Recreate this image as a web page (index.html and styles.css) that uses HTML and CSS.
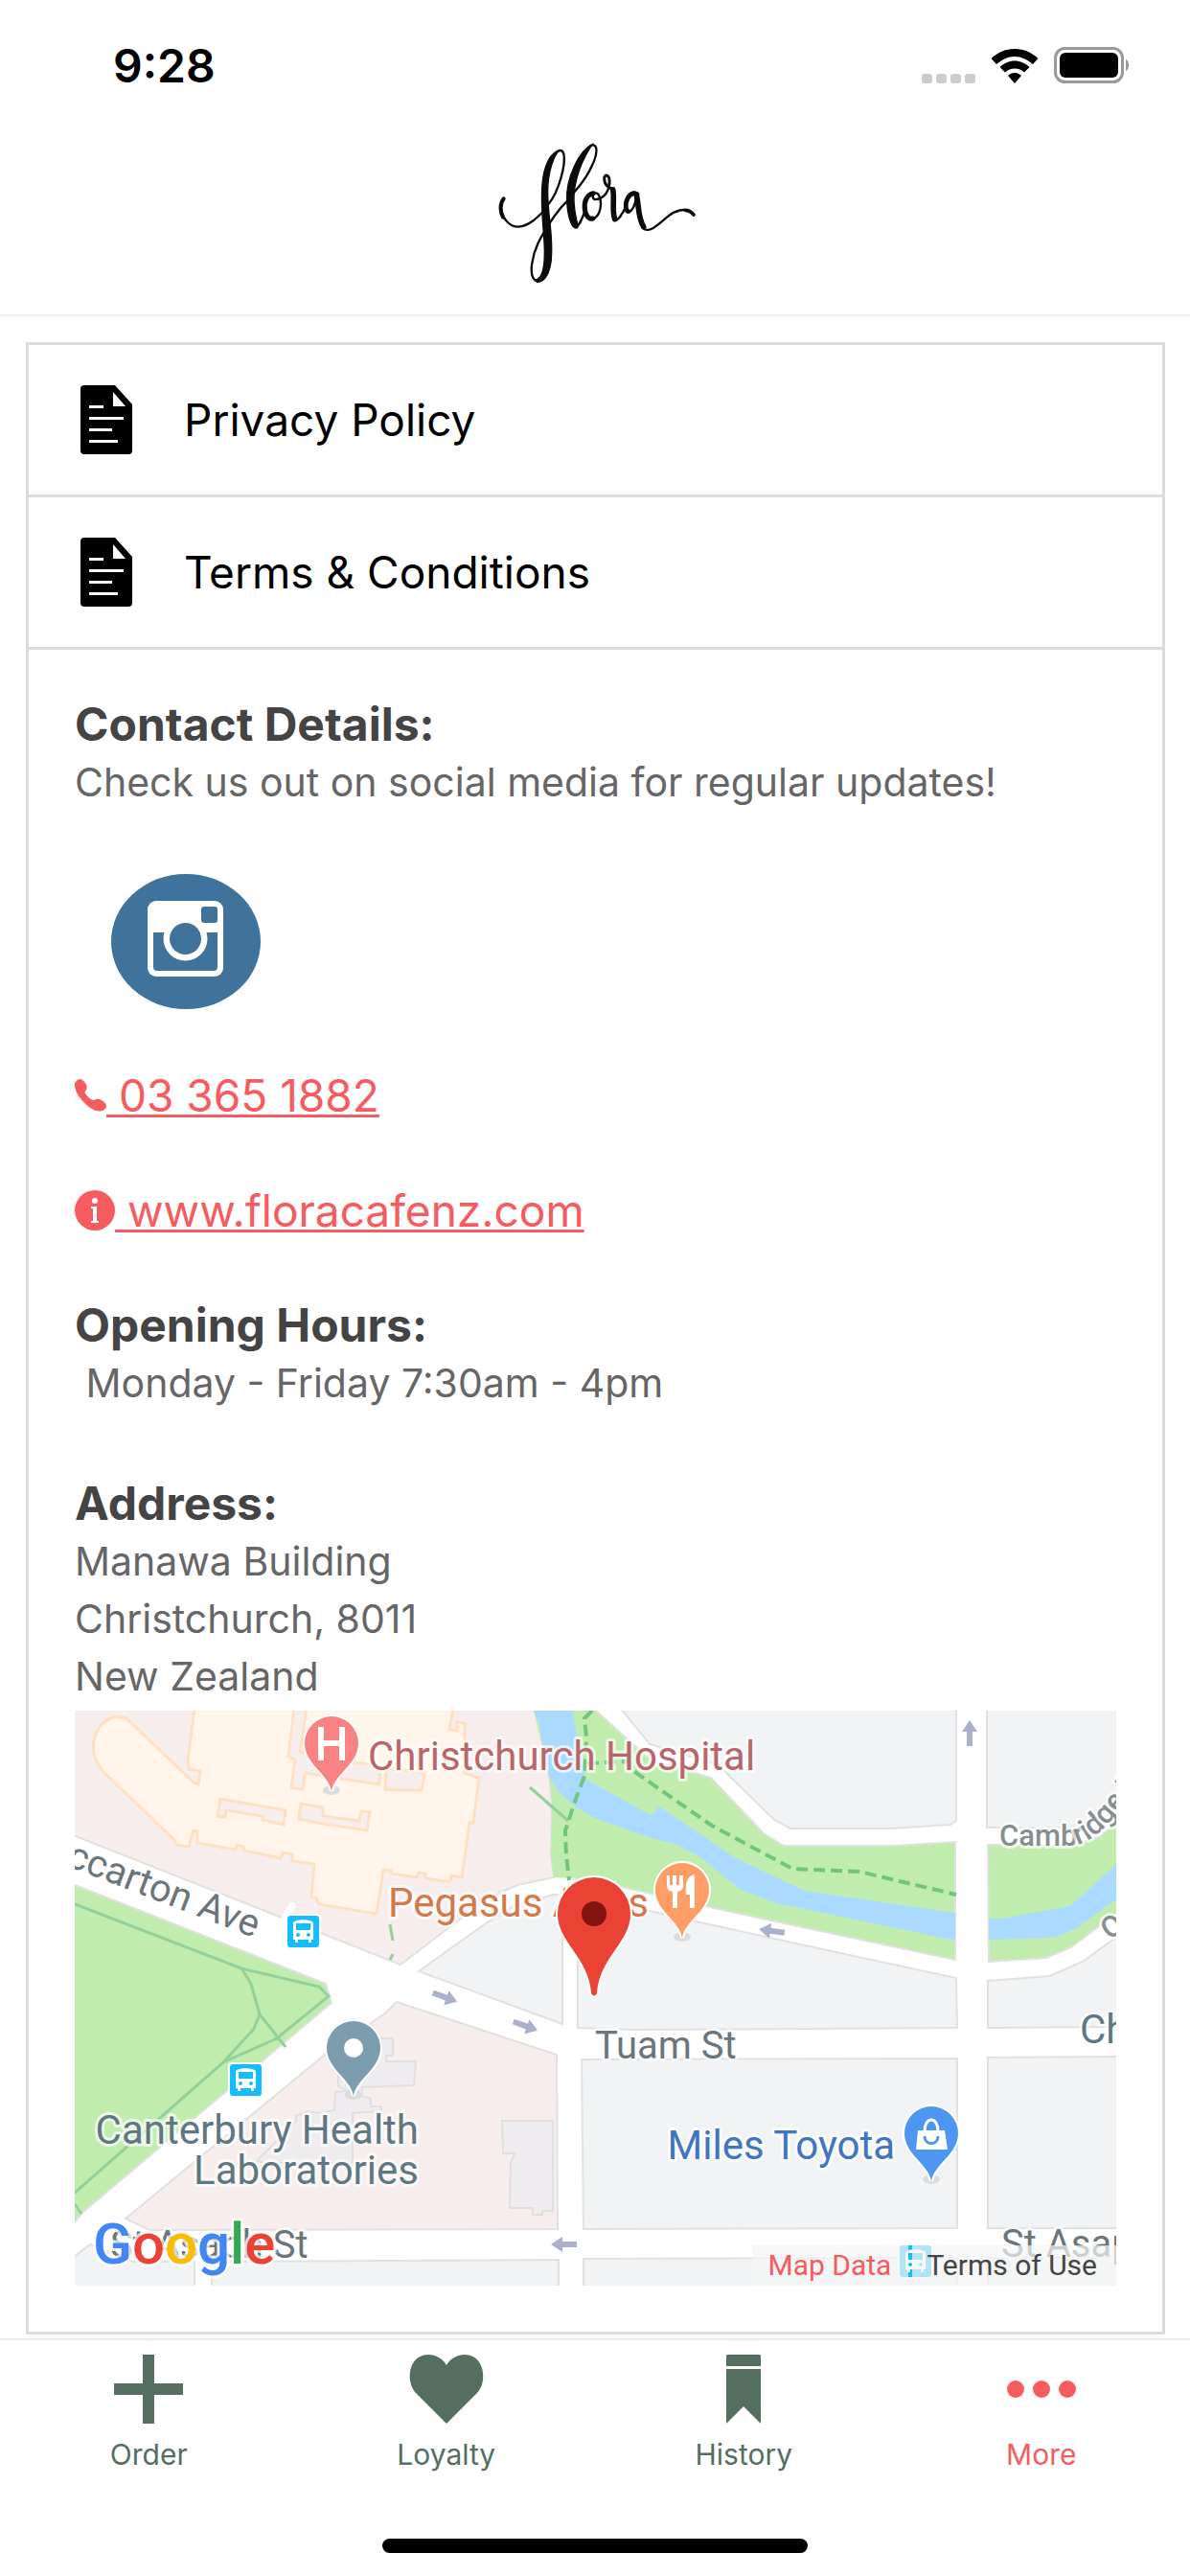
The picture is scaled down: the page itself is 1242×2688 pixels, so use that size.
FILE: index.html
```
<!DOCTYPE html>
<html lang="en">
<head>
    <meta charset="utf-8">
    <meta name="viewport" content="width=device-width, initial-scale=1.0">
    <title>Flora - More</title>
    <link rel="stylesheet" href="styles.css">
</head>
<body>
    <div class="status-bar">
        <span class="time">9:28</span>
        <div class="status-icons">
            <svg class="signal" viewBox="0 0 56 10" aria-hidden="true">
                <rect x="0" width="11" height="10" rx="3"/>
                <rect x="15" width="11" height="10" rx="3"/>
                <rect x="30" width="11" height="10" rx="3"/>
                <rect x="45" width="11" height="10" rx="3"/>
            </svg>
            <svg class="wifi" viewBox="0 0 50 36" aria-hidden="true">
                <path d="M25 0C35 0 43 4 49.5 10L44 16C38 11 32 8 25 8S12 11 6 16L.5 10C7 4 15 0 25 0Z"/>
                <path d="M25 12.5C31 12.5 36 15 40.5 19L35 24.5C32 22 29 20.5 25 20.5S18 22 15 24.5L9.5 19C14 15 19 12.5 25 12.5Z"/>
                <path d="M25 25C28 25 30 26 32 28L25 36L18 28C20 26 22 25 25 25Z"/>
            </svg>
            <svg class="battery" viewBox="0 0 80 38" aria-hidden="true">
                <rect x="1.5" y="1.5" width="70" height="35" rx="10" fill="none" stroke="#999" stroke-width="3"/>
                <rect x="6" y="6" width="61" height="26" rx="6"/>
                <path d="M75 13C79 14 79 24 75 25Z" fill="#999"/>
            </svg>
        </div>
    </div>

    <header class="header">
        <svg class="logo" viewBox="0 0 720 540" role="img" aria-label="Flora">
            <g fill="none" stroke="#0b0b0b" stroke-width="7" stroke-linecap="round" stroke-linejoin="round">
                <path d="M74 232C60 250 64 275 72 290" stroke-width="12"/>
                <path d="M66 262C72 300 95 320 120 320C155 318 180 290 208 262"/>
                <path d="M246 82C272 72 264 130 254 165C244 200 230 230 215 248"/>
                <path d="M180 492C145 480 165 400 190 355C215 310 240 270 274 238"/>
                <path d="M345 66C375 55 365 100 350 130C335 165 310 195 293 214"/>
                <path d="M300 320C314 316 320 290 332 262"/>
                <path d="M355 215C335 218 325 240 328 265C331 288 343 297 353 294" stroke-width="15"/>
                <path d="M353 296C380 285 384 240 370 218C360 206 346 224 358 234C378 236 402 220 405 185"/>
                <path d="M405 186C408 152 388 154 389 170C390 186 398 196 412 200" stroke-width="9"/>
                <path d="M416 204C422 230 412 270 422 296" stroke-width="17"/>
                <path d="M424 300C438 296 444 280 456 258"/>
                <path d="M482 215C465 218 454 240 457 260C458 266 461 272 464 272" stroke-width="14"/>
                <path d="M464 275C478 270 486 250 489 228M474 214C482 210 492 212 496 218"/>
                <path d="M490 220C498 256 494 290 512 320" stroke-width="17"/>
                <path d="M510 324C530 344 562 308 590 286C612 268 640 262 658 272"/>
                <path d="M642 268C654 268 664 276 669 282" stroke-width="11"/>
            </g>
            <g fill="#0b0b0b" stroke="#0b0b0b" stroke-width="4">
                <path d="M250 80C225 85 198 120 194 200C190 280 202 340 202 400C202 460 190 485 172 486C188 506 224 480 224 400C226 330 212 280 212 210C212 150 230 95 250 80Z"/>
                <path d="M352 62C310 80 268 170 272 240C275 295 290 334 306 322C308 310 296 290 294 240C292 170 325 100 352 62Z"/>
            </g>
        </svg>
    </header>

    <!-- shared map shapes -->
    <svg class="defs" aria-hidden="true">
        <defs>
            <path id="pin" d="M0 50C-3 32-28 22-28 0A28 28 0 0 1 28 0C28 22 3 32 0 50Z"/>
            <path id="arrow" d="M-13-3H2V-8L14 0L2 8V3H-13Z" fill="#adb0cc"/>
            <g id="bus">
                <rect x="-2" y="-2" width="37" height="37" rx="4" fill="#fff"/>
                <rect width="33" height="33" rx="3" fill="#14bdff"/>
                <path d="M6 8C6 3 27 3 27 8V25H25V28H22V25H11V28H8V25H6Z" fill="#fff"/>
                <path d="M9 8H24V15H9Z" fill="#14bdff"/>
                <circle cx="11" cy="20" r="2" fill="#14bdff"/>
                <circle cx="22" cy="20" r="2" fill="#14bdff"/>
            </g>
        </defs>
    </svg>

    <main class="card">
        <a class="card-row" href="#privacy">
            <svg class="doc-icon" viewBox="0 0 54 72" aria-hidden="true">
                <path d="M4 0H36L54 20V68Q54 72 50 72H4Q0 72 0 68V4Q0 0 4 0Z"/>
                <path d="M34 7V22H47Z" fill="#fff"/>
                <path d="M9 22.5H24M9 34.5H45M9 46.5H33M9 58.5H39" stroke="#fff" stroke-width="3"/>
            </svg>
            Privacy Policy
        </a>
        <a class="card-row" href="#terms">
            <svg class="doc-icon" viewBox="0 0 54 72" aria-hidden="true">
                <path d="M4 0H36L54 20V68Q54 72 50 72H4Q0 72 0 68V4Q0 0 4 0Z"/>
                <path d="M34 7V22H47Z" fill="#fff"/>
                <path d="M9 22.5H24M9 34.5H45M9 46.5H33M9 58.5H39" stroke="#fff" stroke-width="3"/>
            </svg>
            Terms &amp; Conditions
        </a>

        <div class="details">
            <section>
                <h2>Contact Details:</h2>
                <p>Check us out on social media for regular updates!</p>
                <a class="instagram" href="#instagram" aria-label="Instagram">
                    <svg viewBox="0 0 156 141" aria-hidden="true">
                        <ellipse cx="78" cy="70.5" rx="78" ry="70.5" fill="#40739b"/>
                        <rect x="38" y="28" width="79" height="79" rx="9" fill="#fff"/>
                        <path d="M44 61H111V97Q111 101 107 101H48Q44 101 44 97Z" fill="#40739b"/>
                        <circle cx="77.5" cy="67.5" r="23" fill="#fff"/>
                        <circle cx="77.5" cy="67.5" r="16.5" fill="#40739b"/>
                        <rect x="94" y="34" width="17" height="17" rx="3" fill="#40739b"/>
                    </svg>
                </a>
                <a class="contact-link" href="tel:033651882">
                    <svg class="phone-icon" viewBox="0 0 33 34" aria-hidden="true">
                        <path d="M6 0C8 0 14 6 12.5 10C12 12 10 13 11 15C13 18 16 21 19 22C21 22 22 20 25 21C28 21 33 25 33 28C32 34 26 34 22 33C12 29 0 16 0 6C0 3 3 0 6 0Z"/>
                    </svg><span> 03 365 1882</span>
                </a>
                <a class="contact-link" href="#website">
                    <svg class="info-icon" viewBox="0 0 42 42" aria-hidden="true">
                        <circle cx="21" cy="21" r="21"/>
                        <path d="M17 17H23V32H25V34H17V32H19V19H17Z" fill="#fff"/>
                        <circle cx="21" cy="11" r="3" fill="#fff"/>
                    </svg><span> www.floracafenz.com</span>
                </a>
            </section>

            <section>
                <h2>Opening Hours:</h2>
                <p class="hours">&nbsp;Monday - Friday 7:30am - 4pm</p>
            </section>

            <section class="address">
                <h2>Address:</h2>
                <p>Manawa Building</p>
                <p>Christchurch, 8011</p>
                <p>New Zealand</p>
            </section>

            <div class="map">
                <svg viewBox="0 0 1087 600" preserveAspectRatio="xMidYMid slice" role="img" aria-label="Map of Tuam St, Christchurch">
                    <rect width="1087" height="600" fill="#fff"/>

                    <!-- city blocks -->
                    <g fill="#f1f3f4" stroke="#e1e1e1" stroke-width="2">
                        <path d="M359 272L429 222L459 203L500 192H509V327Z"/>
                        <path d="M525 193L560 200L649 220L762 245L920 279L921 331L583 333L525 331Z"/>
                        <path d="M570-2L600 35L672 57L729 113L747 123H852L914 119L920 115V-2Z"/>
                        <path d="M952-2H1090V86L1055 118L1040 122H952Z"/>
                        <path d="M953 282L1017 277L1052 262L1082 240L1090 236V330L953 331Z"/>
                        <path d="M529 364L921 363V540L531 541Z"/>
                        <path d="M953 362L1090 361V540H953Z"/>
                        <path d="M531 572L921 571V602H531ZM953 571H1090V602H953Z"/>
                        <path d="M143 575L505 573V602H143Z"/>
                        <path d="M-2 571L16 557L60 575H125V602H-2Z"/>
                    </g>

                    <!-- hospital grounds -->
                    <g fill="#f7eded" stroke="#e1e1e1" stroke-width="2">
                        <path d="M-2-2H479L485 15L489 42L495 68L498 95L497 152L500 174L462 182L429 197L382 233L340 265L259 233L219 217L-2 130Z"/>
                        <path d="M336 304L503 359L504 541L78 542L53 530L261 359L325 315Z"/>
                    </g>
                    <path d="M220 216L227 204" stroke="#fff" stroke-width="8" stroke-linecap="round"/>
                    <path d="M125-2L118 52L119 61L131 63L129 77L124 75L54 8L42 6C22 12 10 38 29 63L104 135L106 140L119 142L124 125L128 126V138L167 145L170 140L176 142L177 146L215 154L217 148L227 150V157L250 160L247 194L253 196L254 202L315 212L322 166L330 167V170L357 174L359 169L366 170V175L392 179L393 172L404 174L412 117H416L422 70L407 65V13L399 12V21L391 20L395-2Z" fill="#fff5eb" stroke="#ffe1c2" stroke-width="3"/>
                    <g fill="#f7eded" stroke="#ffe1c2" stroke-width="3">
                        <path d="M152 92L220 104L218 119L196 114V110L158 104L157 111L149 110Z"/>
                        <path d="M236 97L259 101V110L297 115L299 105L308 106L305 125L259 118L234 113Z"/>
                        <path d="M229-2L223 48L230 51L226 81L238 82L240 65L318 77L319 58L284 53L235 43L242-2Z"/>
                        <path d="M325 60L324 82L342 83L362 83L365 65Z"/>
                    </g>
                    <g fill="#eeecee" stroke="#e0dfe0" stroke-width="2">
                        <path d="M319 342H332V360H325V366H356L354 391L300 393V402L309 405V413H320V418L290 420V472H200L190 470L231 428V423L244 418L257 420L271 417L272 398L284 397L275 392V375Z"/>
                        <path d="M446 428H499V522H488V526H478V519H454L455 472L459 462H447Z"/>
                    </g>

                    <!-- parks and river -->
                    <g fill="#c0edae" stroke="#e1e1e1" stroke-width="2">
                        <path d="M-2 181L262 285L268 305L9 523L-2 536Z"/>
                        <path d="M953 140H1042L1069 132L1090 114V210L1069 225L1040 247L1014 258L954 262Z"/>
                    </g>
                    <path d="M479 0H544L575 28L602 52L664 70L719 128L740 141H855L919 137V260L722 218L662 205L575 185L519 175L500 174L497 152L498 95L495 68Z" fill="#c0edae"/>
                    <path d="M544 0L575 28L602 52L664 70L719 128L740 141H855L919 137V260L722 218L662 205L575 185L519 175" fill="none" stroke="#e1e1e1" stroke-width="2"/>
                    <g fill="#aadaff">
                        <path d="M479 0L485 15L489 42L495 68L505 85L522 100L542 112L599 132L625 139L652 152L695 187L735 202L762 207L919 240V211L762 188L690 154L610 100L601 109L534 72L525 28L519 0Z"/>
                        <path d="M954 217H967L1039 204L1087 160V197L1044 228L1022 237L954 239Z"/>
                    </g>
                    <g fill="none" stroke="#93d09c" stroke-width="3">
                        <path d="M0 202L174 269L255 288L265 298L211 342L155 367L0 503"/>
                        <path d="M174 269L184 285L193 317L187 332L155 367M193 317L220 351M0 515L7 525"/>
                        <path d="M475 80L515 115"/>
                        <path d="M329 223L332 240M332 254L329 260"/>
                    </g>
                    <g fill="none" stroke="#72c57f" stroke-width="4" stroke-dasharray="12 6">
                        <path d="M540 0L532 8L534 28L532 68L522 95L512 125L513 152L516 177"/>
                        <path d="M535 55L575 53L586 65L665 120L749 165L819 168L920 192"/>
                    </g>

                    <!-- one way arrows -->
                    <use href="#arrow" transform="translate(934 24) rotate(-90)"/>
                    <use href="#arrow" transform="translate(728 230) rotate(188)"/>
                    <use href="#arrow" transform="translate(386 299) rotate(20)"/>
                    <use href="#arrow" transform="translate(470 329) rotate(20)"/>
                    <use href="#arrow" transform="translate(511 557) rotate(180)"/>

                    <!-- street names -->
                    <g class="map-label street">
                        <text transform="translate(187 237) rotate(21)" text-anchor="end">Riccarton Ave</text>
                        <text x="543" y="363">Tuam St</text>
                        <text x="37" y="571">St Asaph St</text>
                        <text x="967" y="570">St Asaph St</text>
                        <path id="cambridge" d="M965 141H1038C1056 141 1072 126 1084 112L1140 40" fill="none" stroke="none"/>
                        <text class="small"><textPath href="#cambridge">Cambridge Terrace</textPath></text>
                        <text class="small" transform="translate(1080 240) rotate(-35)">Oxford</text>
                    </g>

                    <use href="#bus" x="222" y="214"/>
                    <use href="#bus" x="162" y="369"/>
                    <use href="#bus" x="861" y="558"/>

                    <!-- places -->
                    <g class="map-label place">
                        <text class="hospital" x="306" y="62">Christchurch Hospital</text>
                        <text class="food" x="327" y="215">Pegasus Arms</text>
                        <text class="lab" x="359" y="452" text-anchor="end">Canterbury Health</text>
                        <text class="lab" x="359" y="494" text-anchor="end">Laboratories</text>
                        <text class="shop" x="856" y="468" text-anchor="end">Miles Toyota</text>
                        <text class="lab" x="1049" y="347">Christchurch</text>
                    </g>

                    <g fill="#dcdcdc">
                        <ellipse cx="268" cy="83" rx="9" ry="5"/>
                        <ellipse cx="634" cy="236" rx="9" ry="5"/>
                        <ellipse cx="291" cy="401" rx="9" ry="5"/>
                        <ellipse cx="894" cy="489" rx="9" ry="5"/>
                    </g>
                    <g stroke="#fff" stroke-width="4" paint-order="stroke">
                        <use href="#pin" x="268" y="34" fill="#f98282"/>
                        <use href="#pin" x="634" y="187" fill="#ff9d66"/>
                        <use href="#pin" x="291" y="352" fill="#7c9db0"/>
                        <use href="#pin" x="894" y="441" fill="#4d97f3"/>
                        <path d="M539 295C537 258 504 242 504 212A38 38 0 0 1 580 212C580 242 547 258 545 295Q542 300 539 295Z" fill="#ea4335"/>
                    </g>
                    <circle cx="542" cy="212" r="13" fill="#811411"/>
                    <circle cx="291" cy="352" r="10" fill="#fff"/>
                    <path d="M257 17V52M279 17V52M257 34H279" stroke="#fff" stroke-width="6"/>
                    <path d="M618 172H621V182H624V172H628V182H631V172H635V183Q635 188 629 189V206H624V189Q618 188 618 183ZM647 171V206H642V192H638C637 180 639 172 647 171Z" fill="#fff"/>
                    <path d="M880 438H908L911 458H878Z" fill="#fff"/>
                    <path d="M887 439C887 423 901 423 901 439" fill="none" stroke="#fff" stroke-width="3"/>
                    <path d="M887 444C887 454 901 454 901 444" fill="none" stroke="#4d97f3" stroke-width="3"/>

                    <text class="google" x="19" y="577"><tspan fill="#4285f4">G</tspan><tspan fill="#ea4335">o</tspan><tspan fill="#fbbc05">o</tspan><tspan fill="#4285f4">g</tspan><tspan fill="#34a853">l</tspan><tspan fill="#ea4335">e</tspan></text>
                </svg>
                <div class="map-links">
                    <a class="map-data" href="#map-data">Map Data</a>
                    <a class="map-terms" href="#map-terms">Terms of Use</a>
                </div>
            </div>
        </div>
    </main>

    <nav class="tabs">
        <a class="tab" href="#order">
            <svg viewBox="0 0 78 72" aria-hidden="true"><path d="M33 0H45V30H75V42H45V72H33V42H3V30H33Z"/></svg>
            Order
        </a>
        <a class="tab" href="#loyalty">
            <svg viewBox="0 0 78 72" aria-hidden="true"><path d="M39 72L7 40C-4 29-1 0 20 0C28 0 35 4 39 11C43 4 50 0 58 0C79 0 82 29 71 40Z"/></svg>
            Loyalty
        </a>
        <a class="tab" href="#history">
            <svg viewBox="0 0 78 72" aria-hidden="true"><path d="M22 0H56L57 1V12H21V1ZM21 15H57V72L39 54L21 72Z"/></svg>
            History
        </a>
        <a class="tab active" href="#more">
            <svg viewBox="0 0 78 72" aria-hidden="true"><circle cx="12" cy="36" r="9"/><circle cx="39" cy="36" r="9"/><circle cx="66" cy="36" r="9"/></svg>
            More
        </a>
    </nav>
    <div class="home-bar"></div>
</body>
</html>
```
FILE: styles.css
```
* {
    margin: 0;
    padding: 0;
    box-sizing: border-box;
}

body {
    font-family: Inter, "Liberation Sans", sans-serif;
    background: #fff;
    color: #000;
    min-height: 100vh;
    display: flex;
    flex-direction: column;
}

svg {
    display: block;
}

a {
    color: inherit;
    text-decoration: none;
}

.defs {
    position: absolute;
    width: 0;
    height: 0;
}

.status-bar {
    display: flex;
    justify-content: space-between;
    align-items: center;
    height: 130px;
    padding: 6px 62px 0 118px;
}

.time {
    font-size: 48px;
    font-weight: 600;
}

.status-icons {
    display: flex;
    align-items: flex-end;
    gap: 16px;
}

.signal {
    width: 56px;
    height: 10px;
    fill: #ccc;
}

.wifi {
    width: 50px;
    height: 36px;
}

.battery {
    width: 80px;
    height: 38px;
}

.header {
    display: flex;
    justify-content: center;
    height: 200px;
    border-bottom: 2px solid #efefef;
}

.logo {
    width: 240px;
    height: 180px;
}

.card {
    margin: 27px 26px 4px 27px;
    border: 3px solid #dcdcdc;
}

.card-row {
    display: flex;
    align-items: center;
    gap: 54px;
    height: 159px;
    padding: 0 54px;
    border-bottom: 3px solid #dcdcdc;
    font-size: 46px;
}

.doc-icon {
    width: 54px;
    height: 72px;
}

.details {
    padding: 48px;
    color: #666;
    font-size: 41px;
    line-height: 60px;
}

.details section {
    margin-bottom: 60px;
}

.details .address {
    margin-bottom: 6px;
}

.details h2 {
    color: #444;
    font-size: 48px;
    font-weight: 700;
    line-height: 60px;
}

.hours {
    margin-bottom: 66px;
}

.instagram {
    display: block;
    width: 156px;
    margin: 66px 38px 60px;
}

.instagram svg {
    width: 156px;
    height: 141px;
}

.contact-link {
    display: flex;
    align-items: center;
    height: 60px;
    margin-bottom: 60px;
    color: #f65c5f;
    font-size: 46px;
}

.contact-link svg {
    fill: #f65c5f;
}

.contact-link span {
    white-space: pre;
    text-decoration: underline;
    text-decoration-thickness: 3px;
    text-underline-offset: 3px;
    text-decoration-skip-ink: none;
}

.phone-icon {
    width: 33px;
    height: 34px;
}

.info-icon {
    width: 42px;
    height: 42px;
}

.map {
    position: relative;
    height: 600px;
    font-family: Roboto, sans-serif;
}

.map svg {
    width: 100%;
    height: 100%;
}

.map-label text {
    stroke: rgba(255, 255, 255, 0.7);
    stroke-width: 6px;
    stroke-linejoin: round;
    paint-order: stroke;
}

.street {
    font-size: 40px;
    fill: #6b767b;
}

.street .small {
    font-size: 31px;
    font-weight: 500;
    fill: #868e90;
}

.place {
    font-size: 42px;
}

.hospital {
    fill: #b9656a;
}

.food {
    fill: #d27a4c;
}

.lab {
    fill: #5f7782;
}

.shop {
    fill: #4076bd;
}

.google {
    font-size: 60px;
    font-weight: 500;
    stroke: rgba(255, 255, 255, 0.7);
    stroke-width: 6px;
    paint-order: stroke;
}

/* links laid over the bottom right corner of the map */
.map-links {
    position: absolute;
    right: 0;
    bottom: 0;
    display: flex;
    gap: 4px;
    font-size: 30px;
    line-height: 42px;
}

.map-links a {
    background: rgba(245, 245, 245, 0.7);
}

.map-data {
    padding: 0 18px 0 16px;
    color: #f65c5f;
}

.map-terms {
    padding: 0 20px 0 15px;
    color: #444;
}

.tabs {
    display: flex;
    border-top: 2px solid #eaeaea;
    padding-top: 15px;
}

.tab {
    flex: 1;
    display: flex;
    flex-direction: column;
    align-items: center;
    gap: 12px;
    color: #546e60;
    fill: #546e60;
    font-size: 30px;
    line-height: 40px;
}

.tab svg {
    width: 78px;
    height: 72px;
}

.tab.active {
    color: #f65c5f;
    fill: #f65c5f;
}

.home-bar {
    width: 444px;
    height: 15px;
    margin: auto auto 24px;
    border-radius: 8px;
    background: #000;
}
```
